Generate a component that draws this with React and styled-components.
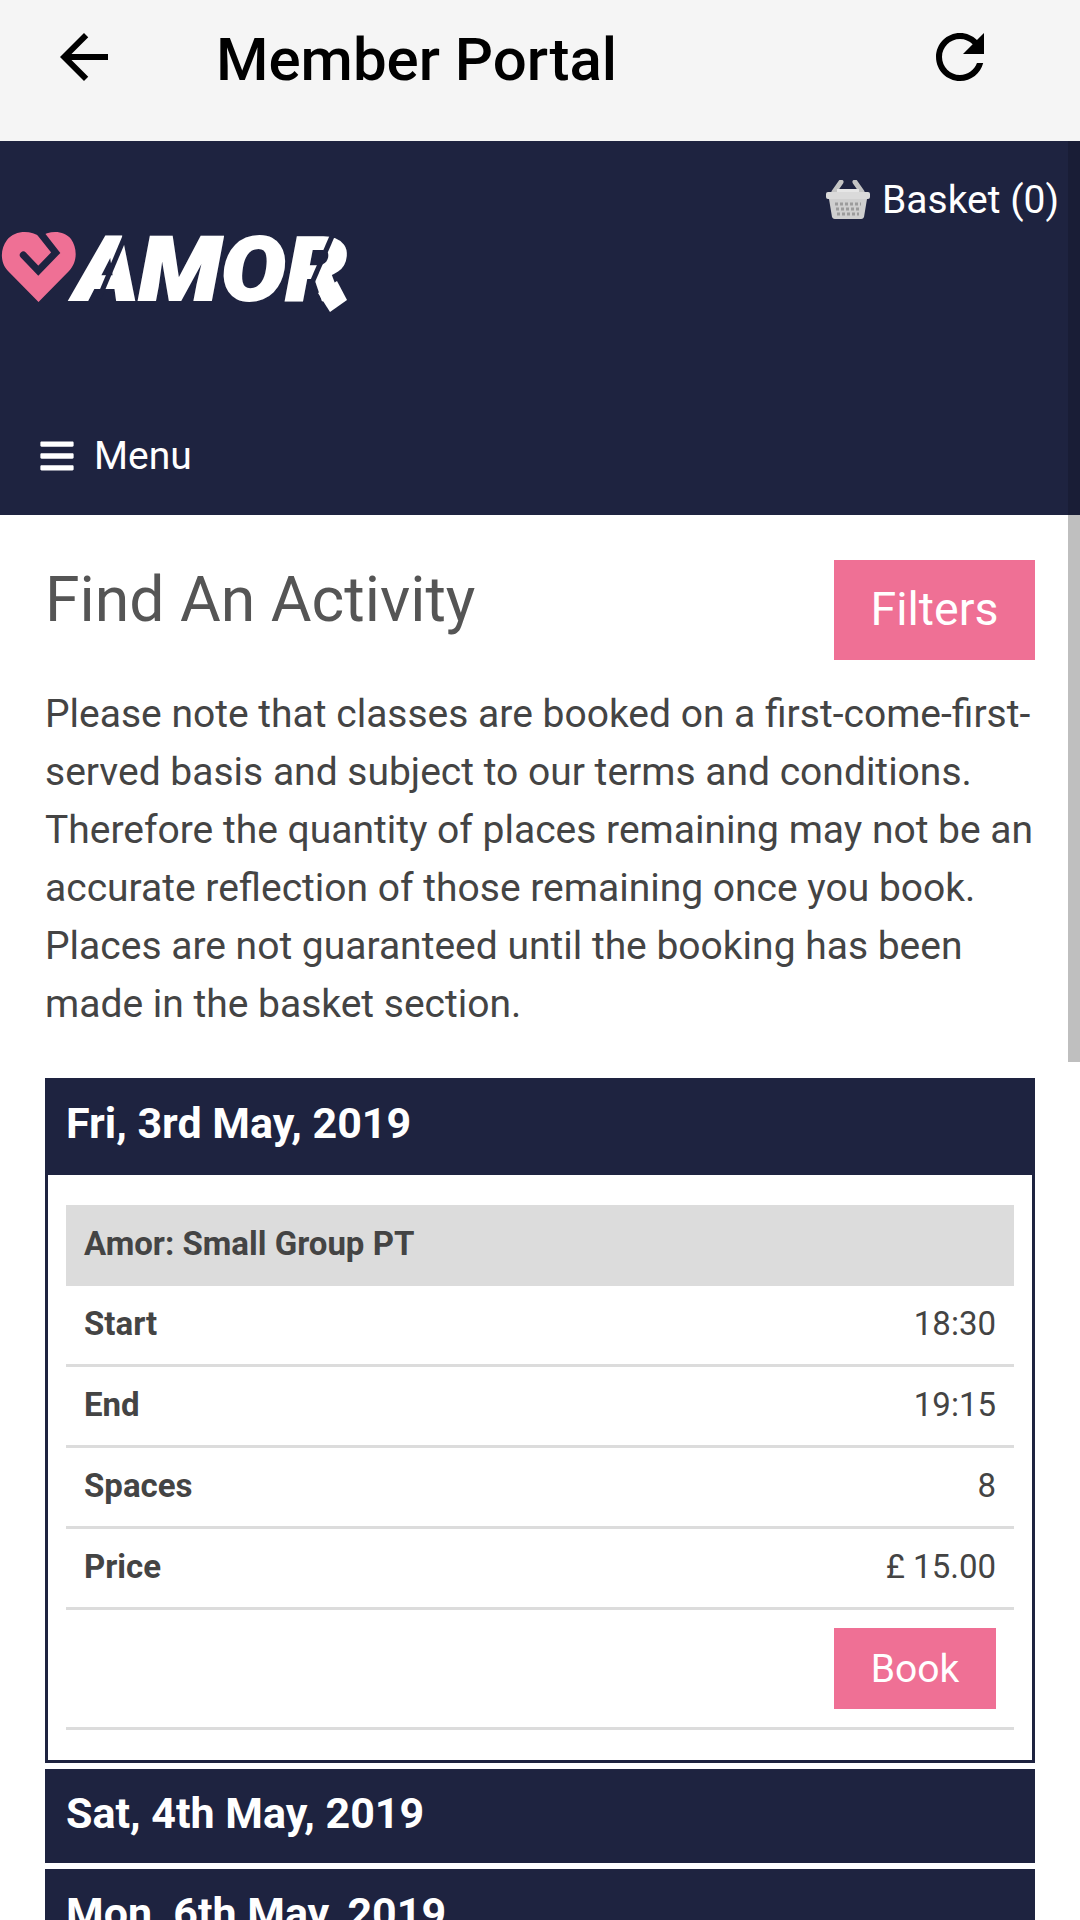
import React from 'react';
import styled, { createGlobalStyle } from 'styled-components';
import { FaBars } from 'react-icons/fa';

const NAVY = '#1e2340';
const PINK = '#ef7095';

const GlobalStyle = createGlobalStyle`
    html, body {
        margin: 0;
        padding: 0;
        background: #fff;
    }
    body {
        font-family: Roboto, "Liberation Sans", sans-serif;
        color: #444;
        overflow: hidden;
    }
`

const rows = [
    { label: 'Start', value: '18:30' },
    { label: 'End', value: '19:15' },
    { label: 'Spaces', value: '8' },
    { label: 'Price', value: '£ 15.00' },
];

const BackIcon = () => (
    <svg width="72" height="72" viewBox="0 0 24 24">
        <path d="M20 11H7.83l5.59-5.59L12 4l-8 8 8 8 1.41-1.41L7.83 13H20v-2z" fill="#000" />
    </svg>
);

const ReloadIcon = () => (
    <svg width="72" height="72" viewBox="0 0 24 24">
        <path d="M17.65 6.35C16.2 4.9 14.21 4 12 4c-4.42 0-7.99 3.58-7.99 8s3.57 8 7.99 8c3.73 0 6.84-2.55 7.73-6h-2.08c-.82 2.33-3.04 4-5.65 4-3.31 0-6-2.69-6-6s2.69-6 6-6c1.66 0 3.14.69 4.22 1.78L13 11h7V4l-2.35 2.35z" fill="#000" />
    </svg>
);

const BasketIcon = () => (
    <BasketSvg width="46" height="40" viewBox="0 0 46 40">
        <path d="M16 2L9 12M30 2l7 10" stroke="#c4c4c4" strokeWidth="5" strokeLinecap="round" />
        <path d="M12 9h22v6H12z" fill="#e6e6e6" />
        <path d="M3 12h40a2 2 0 0 1 2 2v3a2 2 0 0 1-2 2H3a2 2 0 0 1-2-2v-3a2 2 0 0 1 2-2z" fill="#dadada" />
        <path d="M4 19h38l-3 18a3 3 0 0 1-3 2H10a3 3 0 0 1-3-2z" fill="#cfcfcf" />
        <path d="M10 24h26M11 29h24M12 34h22" stroke="#9c9c9c" strokeWidth="3" strokeDasharray="3 2" />
    </BasketSvg>
);

const LogoMark = () => (
    <svg width="352" height="122" viewBox="0 -15 352 122">
        <path d="M38.5 77L8 46C0 38 0 24 7 15 15 5 31 5 40 12 49 5 64 5 71 14 78 24 77 38 69 46z" fill={PINK} />
        <path d="M41 9L55.7 27.7 38.3 45.7 23.3 30" fill="none" stroke={NAVY} strokeWidth="7" strokeLinecap="round" />
        <LogoText x="75" y="75" textLength="272" lengthAdjust="spacingAndGlyphs">AMOR</LogoText>
        <path d="M337 56l10 19-17 12-12-19z" fill="#fff" />
        <path d="M126 9L99 73" stroke={NAVY} strokeWidth="5" fill="none" />
        <path d="M333 9L308 67" stroke={NAVY} strokeWidth="5" fill="none" />
    </svg>
);

const App = () => {
    return (
        <Page>
            <GlobalStyle />
            <AppBar>
                <BarIcon><BackIcon /></BarIcon>
                <BarTitle>Member Portal</BarTitle>
                <BarIcon $right><ReloadIcon /></BarIcon>
            </AppBar>
            <Header>
                <BasketLink>
                    <BasketIcon />
                    <span>Basket (0)</span>
                </BasketLink>
                <Logo>
                    <LogoMark />
                </Logo>
                <MenuToggle>
                    <FaBars />
                    <span>Menu</span>
                </MenuToggle>
                <ScrollTrackDark />
            </Header>
            <Content>
                <TitleRow>
                    <Heading>Find An Activity</Heading>
                    <FilterButton>Filters</FilterButton>
                </TitleRow>
                <Intro>
                    Please note that classes are booked on a first-come-first-served basis and subject to our terms and conditions. Therefore the quantity of places remaining may not be an accurate reflection of those remaining once you book. Places are not guaranteed until the booking has been made in the basket section.
                </Intro>
                <DayCard>
                    <DayHeader $tall>Fri, 3rd May, 2019</DayHeader>
                    <DayBody>
                        <ClassName>Amor: Small Group PT</ClassName>
                        {rows.map((row) => (
                            <InfoRow key={row.label}>
                                <strong>{row.label}</strong>
                                <span>{row.value}</span>
                            </InfoRow>
                        ))}
                        <BookRow>
                            <BookButton>Book</BookButton>
                        </BookRow>
                    </DayBody>
                </DayCard>
                <DayHeader>Sat, 4th May, 2019</DayHeader>
                <DayHeader>Mon, 6th May, 2019</DayHeader>
                <ScrollThumb />
            </Content>
        </Page>
    )
}

export default App

const Page = styled.div`
    width: 1080px;
    height: 1920px;
    overflow: hidden;
`

const AppBar = styled.div`
    height: 141px;
    background: #f5f5f5;
    display: flex;
    align-items: flex-start;
    padding: 21px 84px 0 48px;
    box-sizing: border-box;
`

const BarIcon = styled.div`
    display: flex;
    width: 72px;
    height: 72px;
    margin-left: ${({ $right }) => ($right ? 'auto' : '0')};
`

const BarTitle = styled.h1`
    margin: 2px 0 0 96px;
    font-size: 60px;
    line-height: 74px;
    font-weight: 500;
    color: #000;
    white-space: nowrap;
`

const Header = styled.header`
    position: relative;
    height: 374px;
    background: ${NAVY};
    box-sizing: border-box;
    color: #fff;
`

const ScrollTrackDark = styled.div`
    position: absolute;
    top: 0;
    right: 0;
    bottom: 0;
    width: 12px;
    background: #191d36;
`

const BasketLink = styled.div`
    position: absolute;
    top: 36px;
    right: 21px;
    display: flex;
    align-items: center;
    gap: 11px;
    font-size: 39px;
    z-index: 1;
`

const BasketSvg = styled.svg`
    filter: blur(0.7px);
`

const Logo = styled.div`
    display: flex;
    padding-top: 69px;
`

const LogoText = styled.text`
    font-family: Roboto, sans-serif;
    font-style: italic;
    font-weight: 900;
    font-size: 88px;
    fill: #fff;
    stroke: #fff;
    stroke-width: 2px;
`

const MenuToggle = styled.div`
    position: absolute;
    left: 40px;
    bottom: 36px;
    display: flex;
    align-items: center;
    gap: 20px;
    font-size: 39px;

    & > svg {
        width: 34px;
        height: 38px;
    }
`

const Content = styled.main`
    position: relative;
    padding: 45px 45px 0;
`

const ScrollThumb = styled.div`
    position: absolute;
    top: 0;
    right: 0;
    width: 12px;
    height: 547px;
    background: #bfbfbf;
`

const TitleRow = styled.div`
    display: flex;
    justify-content: space-between;
    align-items: flex-start;
`

const Heading = styled.h2`
    margin: -2px 0 0;
    font-size: 62.5px;
    font-weight: 400;
    line-height: 84px;
    color: #555;
`

const FilterButton = styled.div`
    width: 201px;
    height: 100px;
    padding-bottom: 2px;
    box-sizing: border-box;
    background: ${PINK};
    color: #fff;
    font-size: 46.5px;
    display: flex;
    align-items: center;
    justify-content: center;
`

const Intro = styled.p`
    margin: 25px 0 0;
    font-size: 39px;
    line-height: 58px;
    color: #444;
`

const DayCard = styled.section`
    margin-top: 45px;
    border: 3px solid ${NAVY};
    border-top: 0;
    margin-bottom: 6px;
`

const DayHeader = styled.div`
    height: ${({ $tall }) => ($tall ? '97px' : '94px')};
    margin: ${({ $tall }) => ($tall ? '0 -3px' : '0 0 6px')};
    background: ${NAVY};
    color: #fff;
    font-size: 43px;
    font-weight: 700;
    display: flex;
    align-items: center;
    padding: 0 0 7px 21px;
    box-sizing: border-box;
`

const DayBody = styled.div`
    padding: 30px 18px 30px;
`

const ClassName = styled.div`
    height: 81px;
    box-sizing: border-box;
    background: #dcdcdc;
    font-size: 33px;
    font-weight: 700;
    color: #444;
    display: flex;
    align-items: center;
    padding: 0 18px 5px;
`

const InfoRow = styled.div`
    height: 81px;
    box-sizing: border-box;
    border-bottom: 3px solid #dcdcdc;
    display: flex;
    align-items: center;
    justify-content: space-between;
    padding: 0 18px 4px;
    font-size: 33px;
    color: #444;
`

const BookRow = styled.div`
    height: 120px;
    box-sizing: border-box;
    border-bottom: 3px solid #dcdcdc;
    display: flex;
    justify-content: flex-end;
    padding: 18px 18px 0;
`

const BookButton = styled.div`
    width: 162px;
    height: 81px;
    background: ${PINK};
    color: #fff;
    font-size: 39px;
    display: flex;
    align-items: center;
    justify-content: center;
`
